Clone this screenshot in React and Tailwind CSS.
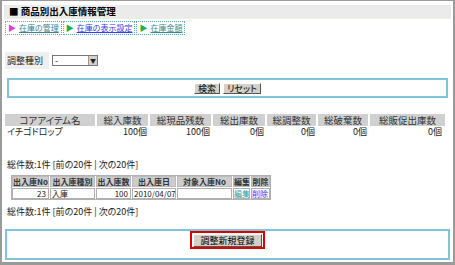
import React from "react";

const font = "font-['Noto_Sans_CJK_JP','Liberation_Sans',sans-serif] [font-feature-settings:'palt']";

function NavLink({ tri, color, children }) {
  return (
    <div className="flex items-center h-[14px] px-[2px] border border-dotted border-[#5ea6c4]">
      <span className={`text-[8px] leading-none mr-[3px] ${tri}`}>▶</span>
      <span className={`underline text-[8px] leading-none ${color}`}>{children}</span>
    </div>
  );
}

const headCols = [
  { label: "コアアイテム名", w: "w-[92px]" },
  { label: "総入庫数", w: "w-[53px]" },
  { label: "総現品残数", w: "w-[63px]" },
  { label: "総出庫数", w: "w-[54px]" },
  { label: "総調整数", w: "w-[51px]" },
  { label: "総破棄数", w: "w-[52px]" },
  { label: "総販促出庫数", w: "w-[75px]" },
];

const rowVals = ["イチゴドロップ", "100個", "100個", "0個", "0個", "0個", "0個"];

const subCols = [
  { label: "出入庫No", w: "w-[37px]" },
  { label: "出入庫種別", w: "w-[45px]" },
  { label: "出入庫数", w: "w-[35px]" },
  { label: "出入庫日", w: "w-[44px]" },
  { label: "対象入庫No", w: "w-[55px]" },
  { label: "編集", w: "w-[17px]" },
  { label: "削除", w: "w-[19px]" },
];

const btn =
  "flex items-center justify-center bg-[#d4d0c8] border border-t-white border-l-white border-r-[#555] border-b-[#555] text-[9px] leading-none text-black";

function Pager() {
  return (
    <div className="ml-[5px] h-[12px] leading-[12px] text-[9px] text-[#222]">
      総件数:1件 [前の20件 | 次の20件]
    </div>
  );
}

export default function App() {
  return (
    <div
      className={`w-[455px] h-[265px] bg-white overflow-hidden border-[#9a9a9a] border-t border-l-2 border-r-2 border-b-[3px] text-[#222] leading-[12px] ${font}`}
    >
      {/* title */}
      <div className="mt-[4px] mx-[2px] h-[14px] bg-[#ebebeb] border-b border-[#eef0dc] flex items-center pl-[5px]">
        <span className="text-[9.5px] font-bold leading-none text-black">■ 商品別出入庫情報管理</span>
      </div>

      {/* nav */}
      <div className="mt-[2px] ml-[3px] flex gap-px">
        <NavLink tri="text-[#e03ce0]" color="text-[#3f7f8f]">在庫の管理</NavLink>
        <NavLink tri="text-[#1fb040]" color="text-[#3a3af0]">在庫の表示設定</NavLink>
        <NavLink tri="text-[#1fb040]" color="text-[#3a8a8a]">在庫金額</NavLink>
      </div>

      {/* filter */}
      <div className="mt-[17px] ml-[3px] flex items-center">
        <div className="w-[44px] h-[17px] bg-[#efefef] pl-[2px] flex items-center text-[9px] leading-none">調整種別</div>
        <div className="ml-[3px] w-[46px] h-[11px] border border-[#777] flex items-center bg-white">
          <span className="flex-1 pl-[2px] text-[9px] leading-none">-</span>
          <span className="w-[9px] h-[9px] bg-[#d4d0c8] border-l border-[#999] flex items-center justify-center text-[6px] leading-none">▼</span>
        </div>
      </div>

      {/* search box */}
      <div className="mt-[9px] mx-[5px] h-[20px] border-2 border-[#80c4d8] flex items-center justify-center gap-[3px]">
        <button className={`h-[11px] px-[3px] ${btn}`}>検索</button>
        <button className={`h-[11px] px-[3px] ${btn}`}>リセット</button>
      </div>

      {/* summary table */}
      <div className="mt-[16px] ml-[3px] flex">
        {headCols.map((c, i) => (
          <div key={c.label} className={`${c.w} flex flex-col`}>
            <div
              className={`h-[12px] bg-[#d0d0d0] text-[9.5px] leading-[12px] text-center text-[#333] whitespace-nowrap ${
                i < headCols.length - 1 ? "border-r-2 border-white" : ""
              }`}
            >
              {c.label}
            </div>
            <div
              className={`h-[12px] text-[9px] leading-[12px] whitespace-nowrap ${
                i === 0 ? "text-left pl-[2px]" : "text-right pr-[3px]"
              }`}
            >
              {rowVals[i]}
            </div>
          </div>
        ))}
      </div>

      <div className="mt-[21px]">
        <Pager />
      </div>

      {/* detail table */}
      <div className="mt-[4px] ml-[9px] flex w-fit border border-[#b0b0b0] gap-px">
        {subCols.map((c, i) => (
          <div key={c.label} className={`${c.w} flex flex-col gap-px`}>
            <div className="h-[11px] bg-[#cccccc] border border-[#bbb] text-[8px] leading-[9px] text-center font-bold text-[#333] whitespace-nowrap overflow-hidden">
              {c.label}
            </div>
            <div className="h-[11px] border border-[#b0b0b0] text-[8px] leading-[9px] whitespace-nowrap overflow-hidden">
              {i === 0 && <div className="text-right pr-[2px]">23</div>}
              {i === 1 && <div className="pl-[1px]">入庫</div>}
              {i === 2 && <div className="text-right pr-[2px]">100</div>}
              {i === 3 && <div className="pl-[1px]">2010/04/07</div>}
              {i === 5 && <div className="text-[#2a9a9a] underline">編集</div>}
              {i === 6 && <div className="text-[#3333ff] underline">削除</div>}
            </div>
          </div>
        ))}
      </div>

      <div className="mt-[6px]">
        <Pager />
      </div>

      {/* register box */}
      <div className="mt-[11px] mx-[3px] h-[31px] border-2 border-[#80c4d8] flex justify-center">
        <div className="h-[18px] border-2 border-[#e00000] p-px flex items-center">
          <button className={`h-[13px] w-[69px] ${btn}`}>調整新規登録</button>
        </div>
      </div>
    </div>
  );
}
